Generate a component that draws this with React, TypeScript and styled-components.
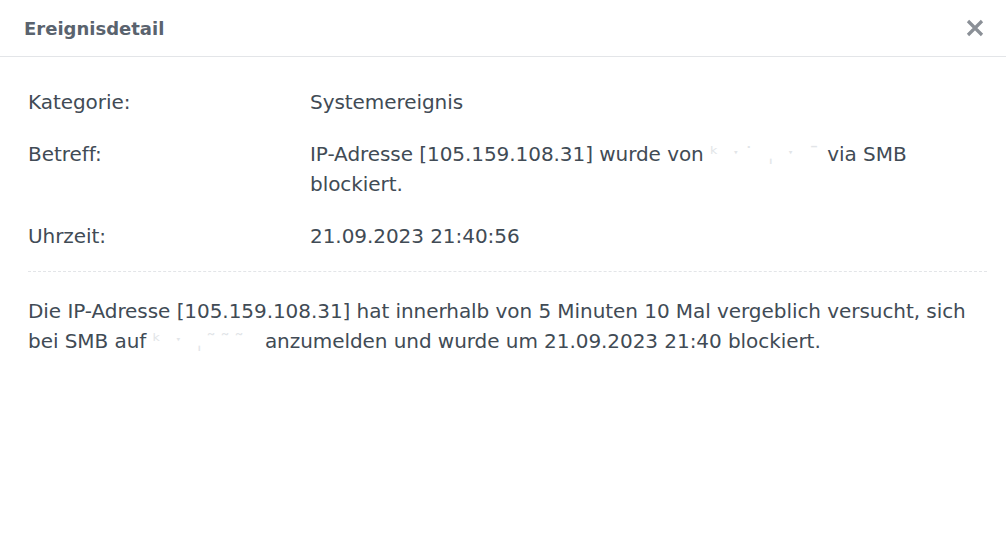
import React from "react";
import styled, { createGlobalStyle } from "styled-components";

const GlobalStyle = createGlobalStyle`
  html, body {
    margin: 0;
    padding: 0;
    background: #ffffff;
  }
  body {
    font-family: "DejaVu Sans", Verdana, sans-serif;
    color: #414b55;
  }
`;

const Dialog = styled.div`
  width: 1006px;
  height: 538px;
  background: #ffffff;
  display: flex;
  flex-direction: column;
`;

const Header = styled.div`
  height: 57px;
  box-sizing: border-box;
  border-bottom: 1px solid #e3e5e8;
  display: flex;
  align-items: center;
  justify-content: space-between;
  padding: 0 22px 0 24px;
`;

const Title = styled.h1`
  margin: 0;
  font-size: 18px;
  font-weight: bold;
  color: #5a636e;
`;

const CloseButton = styled.button`
  border: none;
  background: none;
  padding: 0;
  width: 18px;
  height: 18px;
  display: flex;
  cursor: pointer;
`;

const Body = styled.div`
  padding: 30px 19px 0 28px;
  font-size: 20px;
  line-height: 30px;
  letter-spacing: -0.06px;
`;

const Fields = styled.div`
  display: flex;
  flex-direction: column;
  gap: 22px;
  padding-bottom: 20px;
  border-bottom: 1px dashed #e3e5e8;
`;

const Row = styled.div`
  display: grid;
  grid-template-columns: 282px 1fr;
`;

const Label = styled.div``;

const Value = styled.div`
  padding-right: 60px;
`;

/* redacted hostname: only faint specks remain in the screenshot */
const Masked = styled.span<{ $w: number }>`
  display: inline-block;
  width: ${({ $w }) => $w}px;
  white-space: nowrap;
  color: #e2e5e8;
  letter-spacing: 4px;
`;

const Description = styled.p`
  margin: 24px 0 0 0;
`;

const CloseIcon = () => (
  <svg width="18" height="18" viewBox="0 0 18 18">
    <path
      d="M2 2 L16 16 M16 2 L2 16"
      stroke="#8b9097"
      strokeWidth="3.2"
      strokeLinecap="butt"
    />
  </svg>
);

export default function App() {
  return (
    <Dialog>
      <GlobalStyle />
      <Header>
        <Title>Ereignisdetail</Title>
        <CloseButton aria-label="Schließen">
          <CloseIcon />
        </CloseButton>
      </Header>
      <Body>
        <Fields>
          <Row>
            <Label>Kategorie:</Label>
            <Value>Systemereignis</Value>
          </Row>
          <Row>
            <Label>Betreff:</Label>
            <Value>
              IP-Adresse [105.159.108.31] wurde von{" "}
              <Masked $w={111}>ᵏ ˑ˙ ˌ ˑ ˉ</Masked> via SMB blockiert.
            </Value>
          </Row>
          <Row>
            <Label>Uhrzeit:</Label>
            <Value>21.09.2023 21:40:56</Value>
          </Row>
        </Fields>
        <Description>
          Die IP-Adresse [105.159.108.31] hat innerhalb von 5 Minuten 10 Mal
          vergeblich versucht, sich bei SMB auf{" "}
          <Masked $w={106}>ᵏ ˑ ˌ˜˜˜</Masked> anzumelden und wurde um
          21.09.2023 21:40 blockiert.
        </Description>
      </Body>
    </Dialog>
  );
}
